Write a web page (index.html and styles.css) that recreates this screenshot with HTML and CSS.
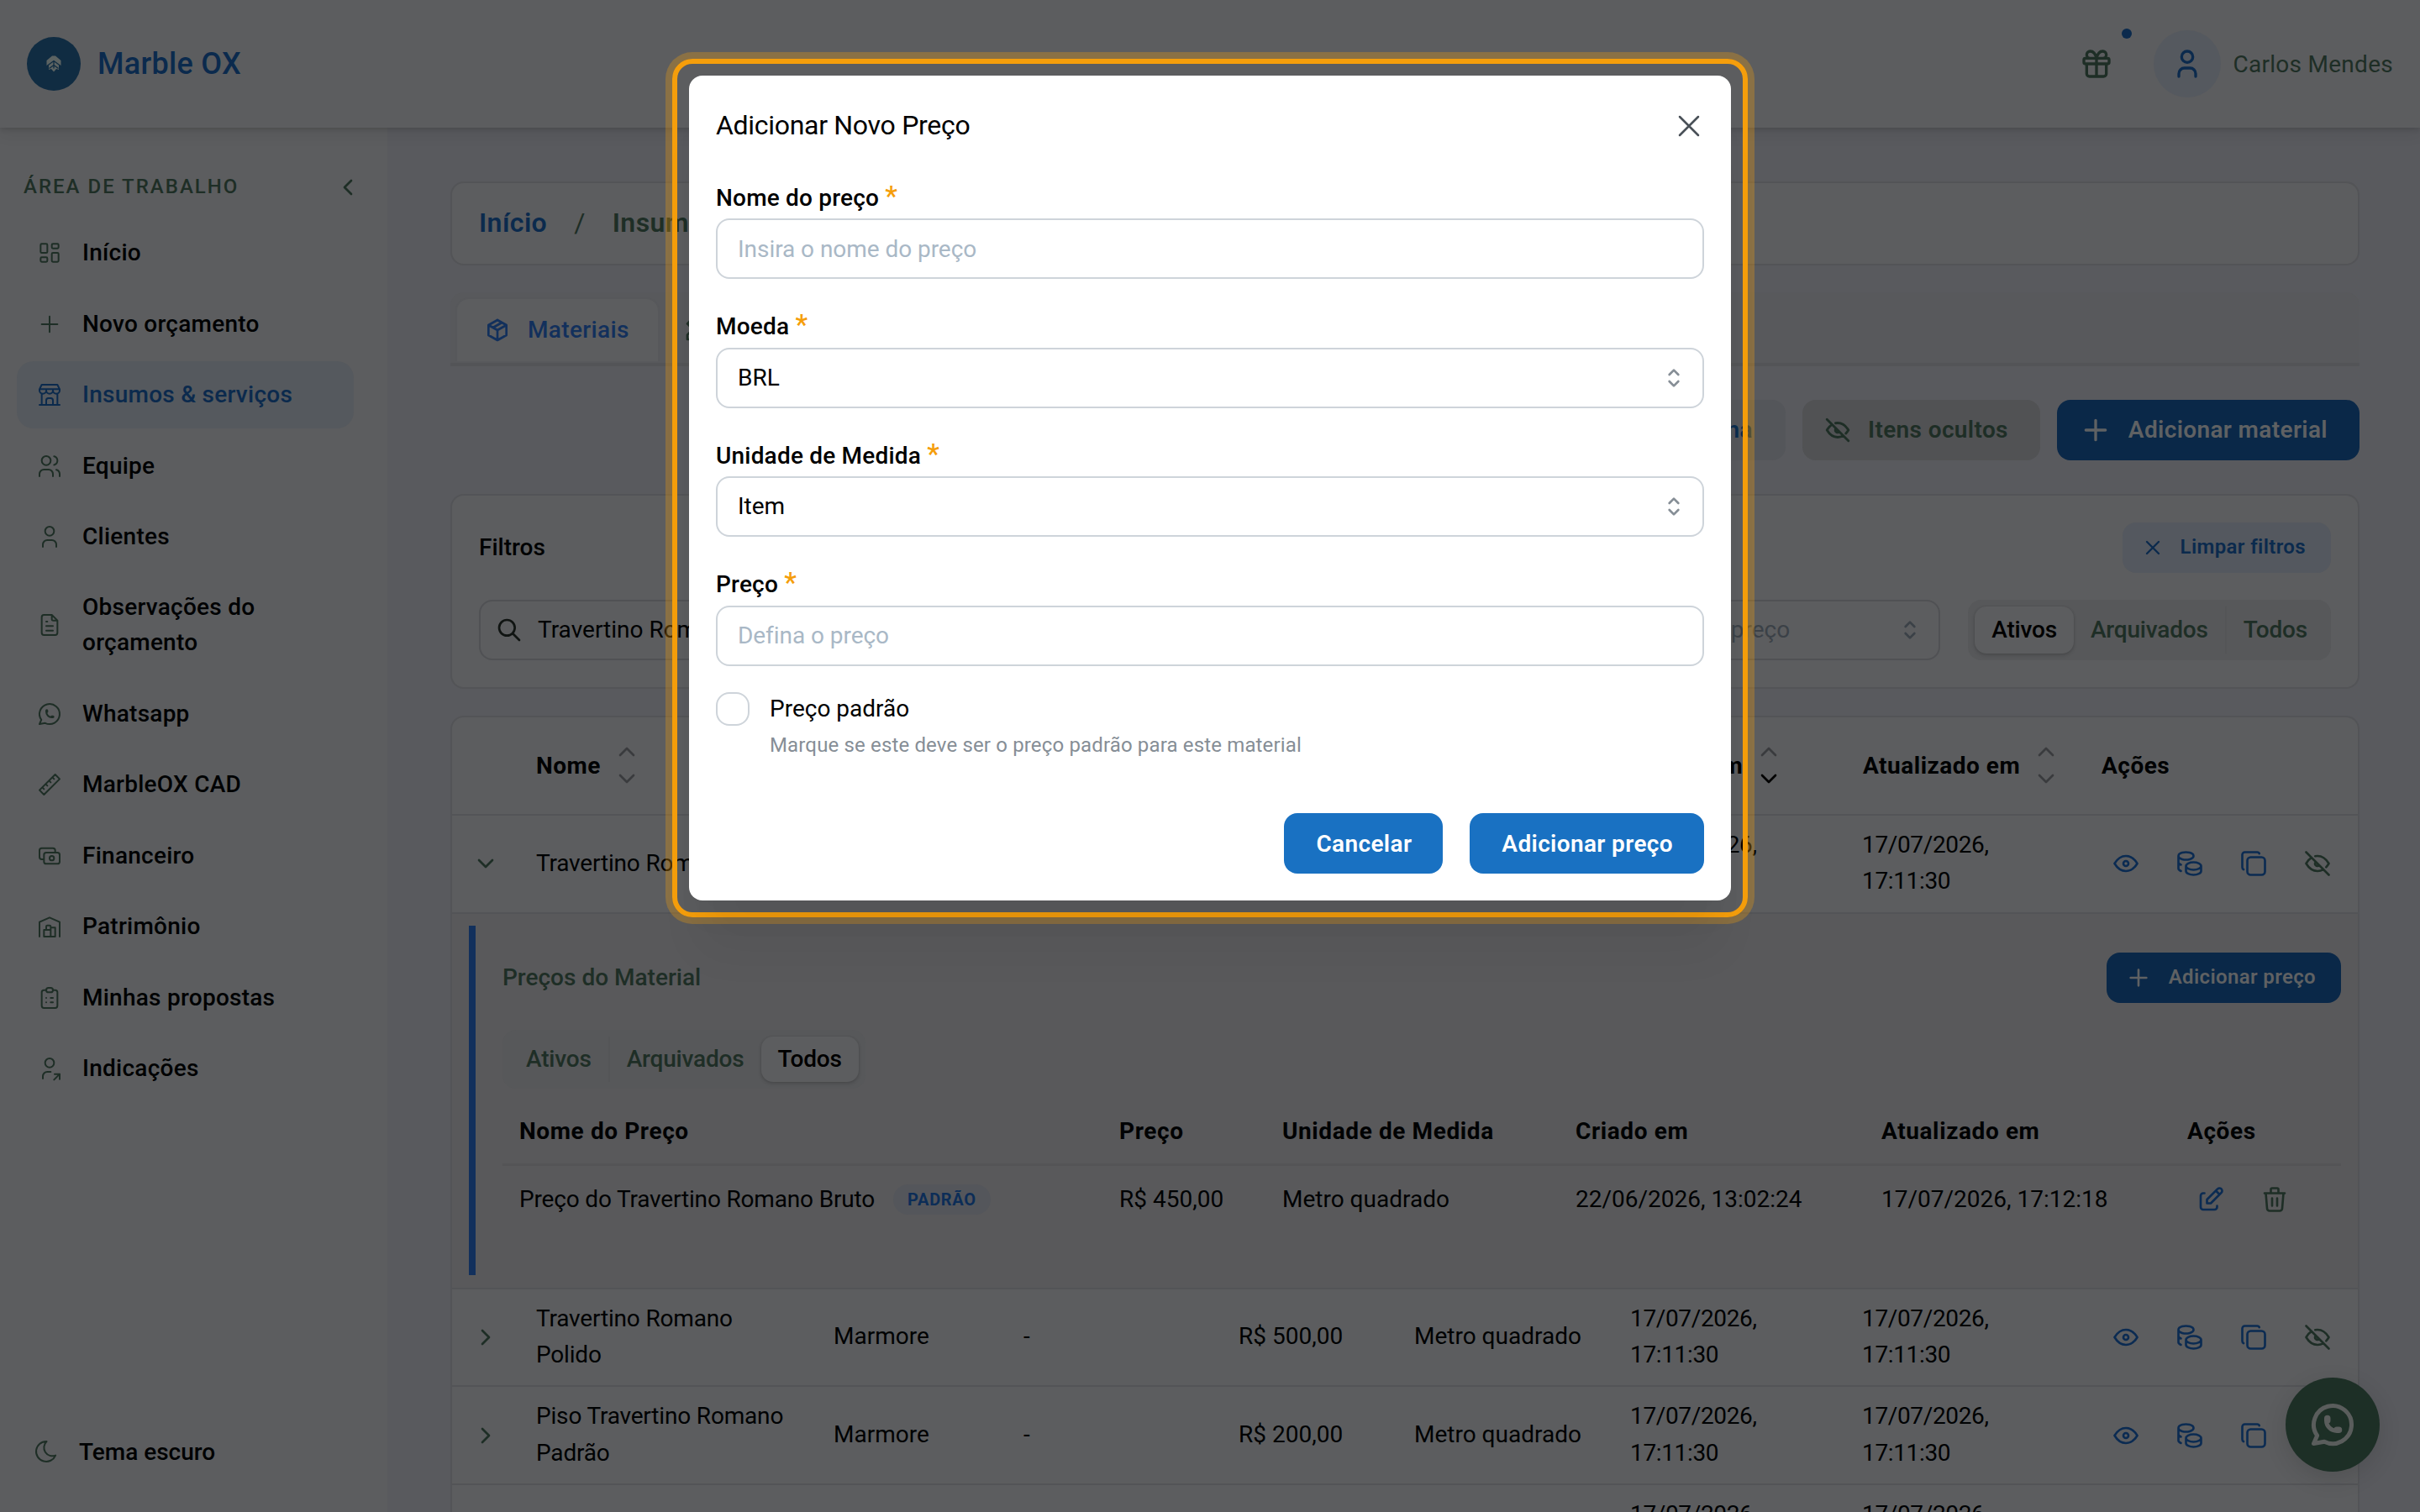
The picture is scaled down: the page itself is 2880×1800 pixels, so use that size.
FILE: index.html
```html
<!DOCTYPE html>
<html lang="pt-BR">
<head>
<meta charset="utf-8">
<title>Marble OX</title>
<link rel="stylesheet" href="styles.css">
</head>
<body>
<svg class="sprite" aria-hidden="true">
  <symbol id="i-dashboard" viewBox="0 0 24 24"><path d="M5 4h4a1 1 0 0 1 1 1v6a1 1 0 0 1-1 1H5a1 1 0 0 1-1-1V5a1 1 0 0 1 1-1M5 16h4a1 1 0 0 1 1 1v2a1 1 0 0 1-1 1H5a1 1 0 0 1-1-1v-2a1 1 0 0 1 1-1M15 12h4a1 1 0 0 1 1 1v6a1 1 0 0 1-1 1h-4a1 1 0 0 1-1-1v-6a1 1 0 0 1 1-1M15 4h4a1 1 0 0 1 1 1v2a1 1 0 0 1-1 1h-4a1 1 0 0 1-1-1V5a1 1 0 0 1 1-1"/></symbol>
  <symbol id="i-plus" viewBox="0 0 24 24"><path d="M12 5v14M5 12h14"/></symbol>
  <symbol id="i-store" viewBox="0 0 24 24"><path d="M3 21h18M3 7v1a3 3 0 0 0 6 0V7m0 1a3 3 0 0 0 6 0V7m0 1a3 3 0 0 0 6 0V7H3l2-4h14l2 4M5 21V10.85M19 21V10.85M9 21v-4a2 2 0 0 1 2-2h2a2 2 0 0 1 2 2v4"/></symbol>
  <symbol id="i-users" viewBox="0 0 24 24"><path d="M5 7a4 4 0 1 0 8 0a4 4 0 1 0-8 0M3 21v-2a4 4 0 0 1 4-4h4a4 4 0 0 1 4 4v2M16 3.13a4 4 0 0 1 0 7.75M21 21v-2a4 4 0 0 0-3-3.85"/></symbol>
  <symbol id="i-user" viewBox="0 0 24 24"><path d="M8 7a4 4 0 1 0 8 0a4 4 0 0 0-8 0M6 21v-2a4 4 0 0 1 4-4h4a4 4 0 0 1 4 4v2"/></symbol>
  <symbol id="i-file" viewBox="0 0 24 24"><path d="M14 3v4a1 1 0 0 0 1 1h4M17 21H7a2 2 0 0 1-2-2V5a2 2 0 0 1 2-2h7l5 5v11a2 2 0 0 1-2 2zM9 9h1M9 13h6M9 17h6"/></symbol>
  <symbol id="i-whatsapp" viewBox="0 0 24 24"><path d="M3 21l1.65-3.8a9 9 0 1 1 3.4 2.9L3 21M9 10a.5.5 0 0 0 1 0V9a.5.5 0 0 0-1 0v1a5 5 0 0 0 5 5h1a.5.5 0 0 0 0-1h-1a.5.5 0 0 0 0 1"/></symbol>
  <symbol id="i-ruler" viewBox="0 0 24 24"><path d="M17 3l4 4L7 21l-4-4zM16 7l-1.5-1.5M13 10l-1.5-1.5M10 13l-1.5-1.5M7 16l-1.5-1.5"/></symbol>
  <symbol id="i-cash" viewBox="0 0 24 24"><path d="M7 11a2 2 0 0 1 2-2h10a2 2 0 0 1 2 2v6a2 2 0 0 1-2 2H9a2 2 0 0 1-2-2zM12 14a2 2 0 1 0 4 0a2 2 0 1 0-4 0M17 9V7a2 2 0 0 0-2-2H5a2 2 0 0 0-2 2v6a2 2 0 0 0 2 2h2"/></symbol>
  <symbol id="i-warehouse" viewBox="0 0 24 24"><path d="M3 21V8l9-4l9 4v13M13 13h4v8H7v-6h6M13 21v-9a1 1 0 0 0-1-1h-2a1 1 0 0 0-1 1v3"/></symbol>
  <symbol id="i-clipboard" viewBox="0 0 24 24"><path d="M9 5H7a2 2 0 0 0-2 2v12a2 2 0 0 0 2 2h10a2 2 0 0 0 2-2V7a2 2 0 0 0-2-2h-2M9 5a2 2 0 0 1 2-2h2a2 2 0 0 1 2 2a2 2 0 0 1-2 2h-2a2 2 0 0 1-2-2zM9 12h.01M13 12h2M9 16h.01M13 16h2"/></symbol>
  <symbol id="i-share" viewBox="0 0 24 24"><path d="M8 7a4 4 0 1 0 8 0a4 4 0 0 0-8 0M6 21v-2a4 4 0 0 1 4-4h3M16 22l5-5M21 21.5V17h-4.5"/></symbol>
  <symbol id="i-moon" viewBox="0 0 24 24"><path d="M12 3h.393a7.5 7.5 0 0 0 7.92 12.446A9 9 0 1 1 12 2.992z"/></symbol>
  <symbol id="i-gift" viewBox="0 0 24 24"><path d="M3 9a1 1 0 0 1 1-1h16a1 1 0 0 1 1 1v2a1 1 0 0 1-1 1H4a1 1 0 0 1-1-1zM12 8v13M19 12v7a2 2 0 0 1-2 2H7a2 2 0 0 1-2-2v-7M7.500 8a2.500 2.500 0 0 1 0-5A4.800 8 0 0 1 12 8a4.800 8 0 0 1 4.500-5a2.500 2.500 0 0 1 0 5"/></symbol>
  <symbol id="i-box" viewBox="0 0 24 24"><path d="M12 3l8 4.500v9L12 21l-8-4.500v-9L12 3M12 12l8-4.500M12 12v9M12 12L4 7.500M16 5.250l-8 4.500"/></symbol>
  <symbol id="i-tools" viewBox="0 0 24 24"><path d="M3 21h4L20 8a1.500 1.500 0 0 0-4-4L3 17v4M14.500 5.500l4 4M12 8L7 3L3 7l5 5M7 8L5.500 9.500M16 12l5 5l-4 4l-5-5M16 17l-1.500 1.500"/></symbol>
  <symbol id="i-search" viewBox="0 0 24 24"><path d="M3 10a7 7 0 1 0 14 0a7 7 0 1 0-14 0M21 21l-6-6"/></symbol>
  <symbol id="i-eye" viewBox="0 0 24 24"><path d="M10 12a2 2 0 1 0 4 0a2 2 0 0 0-4 0M21 12c-2.400 4-5.400 6-9 6c-3.600 0-6.600-2-9-6c2.400-4 5.400-6 9-6c3.600 0 6.600 2 9 6"/></symbol>
  <symbol id="i-eyeoff" viewBox="0 0 24 24"><path d="M10.585 10.587a2 2 0 0 0 2.829 2.828M16.681 16.673A8.717 8.717 0 0 1 12 18c-3.600 0-6.600-2-9-6c1.272-2.120 2.712-3.678 4.320-4.674m2.860-1.146A9.055 9.055 0 0 1 12 6c3.600 0 6.600 2 9 6c-.666 1.110-1.379 2.067-2.138 2.870M3 3l18 18"/></symbol>
  <symbol id="i-coins" viewBox="0 0 24 24"><path d="M9 14c0 1.657 2.686 3 6 3s6-1.343 6-3s-2.686-3-6-3s-6 1.343-6 3zM9 14v4c0 1.656 2.686 3 6 3s6-1.344 6-3v-4M3 6c0 1.072 1.144 2.062 3 2.598s4.144.536 6 0c1.856-.536 3-1.526 3-2.598c0-1.072-1.144-2.062-3-2.598s-4.144-.536-6 0C4.144 3.938 3 4.928 3 6zM3 6v10c0 .888.772 1.450 2 2M3 11c0 .888.772 1.450 2 2"/></symbol>
  <symbol id="i-copy" viewBox="0 0 24 24"><path d="M7 9.667A2.667 2.667 0 0 1 9.667 7h8.666A2.667 2.667 0 0 1 21 9.667v8.666A2.667 2.667 0 0 1 18.333 21H9.667A2.667 2.667 0 0 1 7 18.333zM4.012 16.737A2.005 2.005 0 0 1 3 15V5c0-1.100.9-2 2-2h10c.75 0 1.158.385 1.500 1"/></symbol>
  <symbol id="i-edit" viewBox="0 0 24 24"><path d="M7 7H6a2 2 0 0 0-2 2v9a2 2 0 0 0 2 2h9a2 2 0 0 0 2-2v-1M20.385 6.585a2.100 2.100 0 0 0-2.970-2.970L9 12v3h3l8.385-8.415zM16 5l3 3"/></symbol>
  <symbol id="i-trash" viewBox="0 0 24 24"><path d="M4 7h16M10 11v6M14 11v6M5 7l1 12a2 2 0 0 0 2 2h8a2 2 0 0 0 2-2l1-12M9 7V4a1 1 0 0 1 1-1h4a1 1 0 0 1 1 1v3"/></symbol>
  <symbol id="i-selector" viewBox="0 0 24 24"><path d="M8 9l4-4l4 4M16 15l-4 4l-4-4"/></symbol>
  <symbol id="i-up" viewBox="0 0 24 24"><path d="M6 15l6-6l6 6"/></symbol>
  <symbol id="i-down" viewBox="0 0 24 24"><path d="M6 9l6 6l6-6"/></symbol>
  <symbol id="i-right" viewBox="0 0 24 24"><path d="M9 6l6 6l-6 6"/></symbol>
  <symbol id="i-left" viewBox="0 0 24 24"><path d="M15 6l-6 6l6 6"/></symbol>
  <symbol id="i-x" viewBox="0 0 24 24"><path d="M6 6l12 12M18 6L6 18"/></symbol>
</svg>

<div class="app">
  <header class="topbar">
    <div class="brand">
      <span class="logo"><svg class="logo-mark" viewBox="0 0 18 20"><path d="M7 .5H11L17.500 6V12.500L15 11V17L12 16L9 19.500L6 16L3 17V11L.500 12.500V6z"/><path class="logo-vein" d="M9 6.500V15.500M.500 12.800L9 6.500L17.500 12.800M3.500 15.500L9 11.500L14.500 15.500"/></svg></span>
      <span class="brand-name">Marble OX</span>
    </div>
    <div class="account">
      <span class="gift"><svg class="icon s40"><use href="#i-gift"/></svg><span class="dot"></span></span>
      <span class="avatar"><svg class="icon s40"><use href="#i-user"/></svg></span>
      <span class="user-name">Carlos Mendes</span>
    </div>
  </header>

  <div class="body">
    <nav class="sidebar">
      <div class="side-head"><span class="side-title">ÁREA DE TRABALHO</span><svg class="icon s32"><use href="#i-left"/></svg></div>
      <div class="nav">
        <a class="nav-item"><svg class="icon s32"><use href="#i-dashboard"/></svg><span>Início</span></a>
        <a class="nav-item"><svg class="icon s32"><use href="#i-plus"/></svg><span>Novo orçamento</span></a>
        <a class="nav-item active"><svg class="icon s32"><use href="#i-store"/></svg><span>Insumos &amp; serviços</span></a>
        <a class="nav-item"><svg class="icon s32"><use href="#i-users"/></svg><span>Equipe</span></a>
        <a class="nav-item"><svg class="icon s32"><use href="#i-user"/></svg><span>Clientes</span></a>
        <a class="nav-item"><svg class="icon s32"><use href="#i-file"/></svg><span>Observações do orçamento</span></a>
        <a class="nav-item"><svg class="icon s32"><use href="#i-whatsapp"/></svg><span>Whatsapp</span></a>
        <a class="nav-item"><svg class="icon s32"><use href="#i-ruler"/></svg><span>MarbleOX CAD</span></a>
        <a class="nav-item"><svg class="icon s32"><use href="#i-cash"/></svg><span>Financeiro</span></a>
        <a class="nav-item"><svg class="icon s32"><use href="#i-warehouse"/></svg><span>Patrimônio</span></a>
        <a class="nav-item"><svg class="icon s32"><use href="#i-clipboard"/></svg><span>Minhas propostas</span></a>
        <a class="nav-item"><svg class="icon s32"><use href="#i-share"/></svg><span>Indicações</span></a>
      </div>
      <a class="theme"><svg class="icon s32"><use href="#i-moon"/></svg><span>Tema escuro</span></a>
    </nav>

    <main class="main">
      <div class="crumbs"><a>Início</a><span class="slash">/</span><span>Insumos &amp; serviços</span></div>

      <div class="tabs">
        <div class="tab on"><svg class="icon s32"><use href="#i-box"/></svg><span>Materiais</span></div>
        <div class="tab"><svg class="icon s32"><use href="#i-tools"/></svg></div>
      </div>

      <div class="toolbar">
        <button class="btn soft">Importar planilha</button>
        <button class="btn grey"><svg class="icon s34"><use href="#i-eyeoff"/></svg>Itens ocultos</button>
        <button class="btn primary"><svg class="icon s40"><use href="#i-plus"/></svg>Adicionar material</button>
      </div>

      <section class="filters">
        <div class="filters-head"><span class="filters-title">Filtros</span>
          <button class="btn small clear"><svg class="icon s28"><use href="#i-x"/></svg>Limpar filtros</button></div>
        <div class="filters-row">
          <div class="search"><svg class="icon s32"><use href="#i-search"/></svg><span>Travertino Romano</span></div>
          <div class="price-filter"><span>Unidade do preço</span><svg class="icon s32"><use href="#i-selector"/></svg></div>
          <div class="segment"><span class="seg on">Ativos</span><span class="seg">Arquivados</span><span class="rule"></span><span class="seg">Todos</span></div>
        </div>
      </section>

      <section class="table">
        <div class="row head">
          <span></span>
          <span class="sort">Nome<i class="arrows"><svg class="icon s32"><use href="#i-up"/></svg><svg class="icon s32"><use href="#i-down"/></svg></i></span>
          <span></span><span></span><span></span><span></span>
          <span class="sort desc">Criado em<i class="arrows"><svg class="icon s32"><use href="#i-up"/></svg><svg class="icon s32"><use href="#i-down"/></svg></i></span>
          <span class="sort">Atualizado em<i class="arrows"><svg class="icon s32"><use href="#i-up"/></svg><svg class="icon s32"><use href="#i-down"/></svg></i></span>
          <span>Ações</span>
        </div>

        <div class="row">
          <svg class="icon s32 toggle"><use href="#i-down"/></svg>
          <span>Travertino Romano</span><span></span><span></span><span></span><span></span>
          <span class="date">17/07/2026, 17:11:30</span><span class="date">17/07/2026, 17:11:30</span>
          <div class="actions"><svg class="icon s36"><use href="#i-eye"/></svg><svg class="icon s36"><use href="#i-coins"/></svg><svg class="icon s36"><use href="#i-copy"/></svg><svg class="icon s36 off"><use href="#i-eyeoff"/></svg></div>
        </div>

        <div class="detail">
          <div class="panel">
            <div class="panel-head"><span>Preços do Material</span>
              <button class="btn small primary"><svg class="icon s32"><use href="#i-plus"/></svg>Adicionar preço</button></div>
            <div class="segment low"><span class="seg">Ativos</span><span class="rule"></span><span class="seg">Arquivados</span><span class="seg on">Todos</span></div>
            <div class="prices">
              <div class="price head"><span>Nome do Preço</span><span>Preço</span><span>Unidade de Medida</span><span>Criado em</span><span>Atualizado em</span><span>Ações</span></div>
              <div class="price"><span class="price-name">Preço do Travertino Romano Bruto<b class="badge">PADRÃO</b></span><span>R$ 450,00</span><span>Metro quadrado</span><span>22/06/2026, 13:02:24</span><span>17/07/2026, 17:12:18</span>
                <div class="actions"><svg class="icon s36"><use href="#i-edit"/></svg><svg class="icon s36 off"><use href="#i-trash"/></svg></div></div>
            </div>
          </div>
        </div>

        <div class="row">
          <svg class="icon s32 toggle"><use href="#i-right"/></svg>
          <span>Travertino Romano Polido</span><span>Marmore</span><span>-</span><span>R$ 500,00</span><span>Metro quadrado</span>
          <span class="date">17/07/2026, 17:11:30</span><span class="date">17/07/2026, 17:11:30</span>
          <div class="actions"><svg class="icon s36"><use href="#i-eye"/></svg><svg class="icon s36"><use href="#i-coins"/></svg><svg class="icon s36"><use href="#i-copy"/></svg><svg class="icon s36 off"><use href="#i-eyeoff"/></svg></div>
        </div>
        <div class="row">
          <svg class="icon s32 toggle"><use href="#i-right"/></svg>
          <span>Piso Travertino Romano Padrão</span><span>Marmore</span><span>-</span><span>R$ 200,00</span><span>Metro quadrado</span>
          <span class="date">17/07/2026, 17:11:30</span><span class="date">17/07/2026, 17:11:30</span>
          <div class="actions"><svg class="icon s36"><use href="#i-eye"/></svg><svg class="icon s36"><use href="#i-coins"/></svg><svg class="icon s36"><use href="#i-copy"/></svg></div>
        </div>
        <div class="row last">
          <span></span>
          <span>Travertino Romano</span><span></span><span></span><span></span><span></span>
          <span class="date">17/07/2026, 17:11:30</span><span class="date">17/07/2026, 17:11:30</span><span></span>
        </div>
      </section>
    </main>
  </div>
</div>

<div class="fab"><svg class="icon"><use href="#i-whatsapp"/></svg></div>

<div class="spotlight">
  <div class="modal">
    <div class="modal-head"><span>Adicionar Novo Preço</span><svg class="icon"><use href="#i-x"/></svg></div>
    <div class="field"><label>Nome do preço <em>*</em></label><div class="input empty">Insira o nome do preço</div></div>
    <div class="field"><label>Moeda <em>*</em></label><div class="input">BRL<svg class="icon s32"><use href="#i-selector"/></svg></div></div>
    <div class="field"><label>Unidade de Medida <em>*</em></label><div class="input">Item<svg class="icon s32"><use href="#i-selector"/></svg></div></div>
    <div class="field"><label>Preço <em>*</em></label><div class="input empty">Defina o preço</div></div>
    <div class="check"><span class="box"></span><div><div class="check-label">Preço padrão</div><div class="check-note">Marque se este deve ser o preço padrão para este material</div></div></div>
    <div class="modal-foot"><button class="btn">Cancelar</button><button class="btn">Adicionar preço</button></div>
  </div>
</div>
</body>
</html>
```
FILE: styles.css
```css
:root {
  --surface: #5c5d5f;
  --page: #595a5e;
  --line: #535457;
  --green: #1e2e26;
  --blue: #0b2a4d;
}

* { box-sizing: border-box; }

body {
  margin: 0;
  width: 2880px;
  height: 1800px;
  overflow: hidden;
  position: relative;
  background: var(--page);
  color: #000203;
  font-family: Roboto, "Liberation Sans", sans-serif;
  font-size: 28px;
  line-height: 43.4px;
}

.sprite { display: none; }

.icon {
  flex: none;
  fill: none;
  stroke: currentColor;
  stroke-width: 2;
  stroke-linecap: round;
  stroke-linejoin: round;
}
.s28 { width: 28px; height: 28px; }
.s32 { width: 32px; height: 32px; }
.s34 { width: 34px; height: 34px; }
.s36 { width: 36px; height: 36px; }
.s40 { width: 40px; height: 40px; }

.btn {
  display: flex;
  align-items: center;
  justify-content: center;
  height: 72px;
  border: 0;
  border-radius: 16px;
  font: 600 28px/43.4px Roboto, "Liberation Sans", sans-serif;
  letter-spacing: .36px;
  white-space: nowrap;
}
.btn.small { height: 60px; font-size: 24px; }
.btn.primary { background: #0a2848; color: #5f6163; }

/* Top bar */
.app { display: flex; flex-direction: column; height: 1800px; }
.topbar {
  flex: none;
  height: 152px;
  padding: 0 32px;
  display: flex;
  align-items: center;
  justify-content: space-between;
  background: var(--surface);
  box-shadow: 0 2px 6px rgba(0, 0, 0, .14), 0 10px 16px rgba(0, 0, 0, .05);
  position: relative;
  z-index: 1;
}
.brand { display: flex; align-items: center; gap: 20px; }
.logo {
  width: 64px;
  height: 64px;
  border-radius: 50%;
  background: #102c42;
  display: flex;
  align-items: center;
  justify-content: center;
}
.logo-mark { width: 18px; height: 20px; fill: #5c6362; }
.logo-vein { fill: none; stroke: #102c42; stroke-width: 1.3; }
.brand-name { padding-top: 1px; font-size: 36px; font-weight: 500; letter-spacing: .3px; color: var(--blue); }
.account { display: flex; align-items: center; }
.gift { display: flex; margin-right: 48px; color: var(--green); position: relative; }
.dot {
  position: absolute;
  left: 50px;
  top: -22px;
  width: 12px;
  height: 12px;
  border-radius: 50%;
  background: var(--blue);
}
.avatar {
  width: 80px;
  height: 80px;
  margin-right: 14px;
  border-radius: 50%;
  background: #55595f;
  color: var(--blue);
  display: flex;
  align-items: center;
  justify-content: center;
}
.user-name { padding-top: 1px; letter-spacing: .28px; color: var(--green); }

/* Sidebar */
.body { flex: 1; display: flex; min-height: 0; }
.sidebar {
  flex: none;
  width: 463px;
  padding: 49px 20px 50px;
  display: flex;
  flex-direction: column;
  background: var(--surface);
  border-right: 2px solid #595a5e;
}
.side-head {
  display: flex;
  align-items: center;
  justify-content: space-between;
  height: 44px;
  padding: 0 13px 0 8px;
  margin: 0 -2px 16px 0;
  color: var(--green);
}
.side-title { font-size: 24px; font-weight: 500; letter-spacing: 2px; }
.nav { display: flex; flex-direction: column; gap: 3.85px; width: 401px; }
.nav-item {
  display: flex;
  align-items: center;
  gap: 23px;
  padding: 19.3px 60px 19.3px 23px;
  border-radius: 20px;
  font-weight: 500;
  letter-spacing: .25px;
  line-height: 42px;
}
.nav-item .icon, .theme .icon { stroke-width: 1.5; color: var(--green); }
.nav-item.active { background: #55595e; color: var(--blue); }
.nav-item.active .icon { color: var(--blue); }
.theme {
  margin-top: auto;
  display: flex;
  align-items: center;
  gap: 23px;
  padding-left: 19px;
  font-weight: 500;
}

/* Main column */
.main {
  flex: 1;
  min-width: 0;
  padding: 64px 72px 0 73px;
  display: flex;
  flex-direction: column;
}
.crumbs {
  flex: none;
  height: 100px;
  padding: 0 32px;
  display: flex;
  align-items: center;
  gap: 32px;
  border: 2px solid var(--line);
  border-radius: 16px;
  background: var(--surface);
  font-size: 32px;
  font-weight: 600;
  letter-spacing: .4px;
  color: var(--green);
}
.crumbs a { color: var(--blue); }
.crumbs .slash { font-weight: 400; }
.tabs {
  flex: none;
  height: 88px;
  margin-top: 32px;
  padding: 6px 6px 0;
  display: flex;
  border-bottom: 4px solid var(--line);
  border-radius: 16px 16px 0 0;
  background: #58595c;
}
.tab {
  display: flex;
  align-items: center;
  gap: 20px;
  padding: 0 34px 0 32px;
  height: 76px;
  font-weight: 500;
  letter-spacing: .35px;
  color: var(--green);
}
.tab.on {
  background: var(--surface);
  border: 2px solid #57585b;
  border-bottom: 0;
  border-radius: 16px 16px 0 0;
  color: #12305c;
}
.tab + .tab { padding-left: 29px; }
.toolbar { display: flex; justify-content: flex-end; gap: 20px; margin-top: 40px; }
.btn.soft { background: #54565a; color: #0c2d4d; padding: 0 39px; }
.btn.grey { background: #515254; color: var(--green); padding: 0 38px 0 25px; gap: 19px; }
.toolbar .primary { padding: 0 38px 0 26px; gap: 19px; }

.filters {
  margin-top: 40px;
  padding: 32px;
  border: 2px solid var(--line);
  border-radius: 16px;
  background: var(--surface);
}
.filters-head { display: flex; align-items: center; justify-content: space-between; margin-bottom: 32px; }
.filters-title { font-weight: 500; }
.btn.clear { background: #54585f; color: var(--blue); padding: 0 30px 0 22px; gap: 19px; }
.filters-row { display: flex; align-items: center; }
.search, .price-filter {
  height: 72px;
  display: flex;
  align-items: center;
  border: 2px solid #505154;
  border-radius: 16px;
}
.search { flex: 1; margin-right: 32px; padding-left: 18px; gap: 18px; }
.search .icon { color: #101412; }
.price-filter { width: 440px; margin-right: 33px; padding: 0 18px 0 28px; justify-content: flex-end; color: #3b4147; }
.price-filter span { margin-right: 127px; }
.segment {
  display: flex;
  align-items: center;
  width: max-content;
  height: 72px;
  padding: 8px;
  border-radius: 16px;
  background: #57585a;
  color: var(--green);
  font-weight: 500;
  letter-spacing: -.18px;
}
.seg { padding: 0 20px; height: 100%; display: flex; align-items: center; border-radius: 14px; }
.seg.on { background: #5c5d5f; color: #000; box-shadow: 0 2px 4px rgba(0, 0, 0, .16), 0 0 3px rgba(0, 0, 0, .08); }
.rule { width: 2px; height: 100%; background: #545557; }
.segment.low { height: 70px; margin-top: 32px; background: #57585a; }

/* Materials table */
.table {
  margin-top: 32px;
  border: 2px solid var(--line);
  border-radius: 16px;
  background: var(--surface);
}
.row {
  display: grid;
  grid-template-columns: 100px 354px 226px 256px 209px 258px 276px 284px 1fr;
  align-items: center;
  padding: 14px 0;
  border-bottom: 2px solid var(--line);
  min-height: 116.8px;
}
.row > span { padding-right: 50px; position: relative; top: -1px; letter-spacing: -.18px; }
.row > span:nth-child(n+3) { padding-right: 16px; letter-spacing: 0; }
.row > .date:nth-child(n+3) { padding-right: 100px; left: -1px; letter-spacing: -.35px; }
.row.head { font-weight: 700; padding: 0; }
.row.head > span:nth-child(n) { padding-right: 0; letter-spacing: .5px; top: 0; }
.toggle { margin-left: 24px; color: var(--green); }
.sort { display: flex; align-items: center; gap: 15px; }
.arrows { display: flex; flex-direction: column; color: #3a3b3e; }
.sort.desc .icon:last-child { color: #000; }
.actions { display: flex; gap: 40px; padding-left: 11px; color: #0b2b52; }
.actions .icon { stroke-width: 1.75; }
.actions .off { color: var(--green); }

.detail {
  height: 447px;
  padding: 14px 20px;
  background: #59595b;
  border-bottom: 2px solid var(--line);
}
.panel { height: 416px; padding: 32px 0 0 32px; border-left: 8px solid #12305c; }
.panel-head { display: flex; justify-content: space-between; align-items: center; font-weight: 500; color: var(--green); }
.panel-head .btn { padding: 0 30px 0 22px; gap: 20px; }
.prices { margin-top: 12px; }
.price {
  display: grid;
  grid-template-columns: 714px 194px 349px 364px 364px 1fr;
  align-items: center;
  height: 80px;
  padding-left: 20px;
}
.price.head { font-weight: 700; letter-spacing: .6px; border-bottom: 3px solid #545456; padding-top: 1px; }
.price .actions { padding-left: 10px; }
.price-name { display: flex; align-items: center; gap: 22px; letter-spacing: -.17px; }
.badge {
  height: 36px;
  padding: 0 17px;
  border-radius: 18px;
  background: #54565b;
  color: #0c2d57;
  font-size: 20px;
  line-height: 36px;
  letter-spacing: .7px;
}

/* Floating chat button */
.fab {
  position: absolute;
  left: 2720px;
  top: 1640px;
  width: 112px;
  height: 112px;
  border-radius: 50%;
  background: #1d2f26;
  color: #5a5d5c;
  display: flex;
  align-items: center;
  justify-content: center;
  box-shadow: 0 8px 28px rgba(0, 0, 0, .12);
}
.fab .icon { width: 60px; height: 60px; }

/* Modal with highlight ring */
.spotlight {
  position: absolute;
  z-index: 2;
  left: 800px;
  top: 70px;
  width: 1280px;
  padding: 14px;
  border: 6px solid #f59e0b;
  border-radius: 24px;
  box-shadow: 0 0 0 8px rgba(245, 158, 11, .3);
}
.modal {
  height: 982px;
  padding: 0 32px 32px;
  border-radius: 16px;
  background: #fff;
  color: #000;
  display: flex;
  flex-direction: column;
  box-shadow: 0 72px 56px -14px rgba(0, 0, 0, .05), 0 34px 34px -14px rgba(0, 0, 0, .04);
}
.modal-head {
  height: 123px;
  padding-bottom: 4px;
  display: flex;
  align-items: center;
  justify-content: space-between;
  font-size: 32px;
  letter-spacing: -.3px;
}
.modal-head .icon { width: 44px; height: 44px; margin-right: -4px; stroke-width: 1.4; color: #495057; }
.field { margin-bottom: 34px; }
.field label { display: block; height: 47.4px; padding-top: 1px; font-weight: 500; letter-spacing: .2px; }
.field em { font-style: normal; font-size: 33px; line-height: 0; color: #f59e0b; }
.input {
  height: 72px;
  padding: 0 18px 0 24px;
  border: 2px solid #ced4da;
  border-radius: 16px;
  display: flex;
  align-items: center;
  justify-content: space-between;
}
.input .icon { color: #868e96; }
.input.empty { color: #a9b8c6; letter-spacing: -.05px; }
.check { display: flex; gap: 24px; margin-top: -5px; }
.box { width: 40px; height: 40px; margin-top: 2px; border: 2px solid #ced4da; border-radius: 16px; }
.check-note { margin-top: 4px; font-size: 24px; line-height: 37px; letter-spacing: .15px; color: #868e96; }
.modal-foot { margin-top: auto; display: flex; justify-content: flex-end; gap: 32px; }
.modal-foot .btn { background: #1971c2; color: #fff; padding: 1px 37px 0 38px; }
```
